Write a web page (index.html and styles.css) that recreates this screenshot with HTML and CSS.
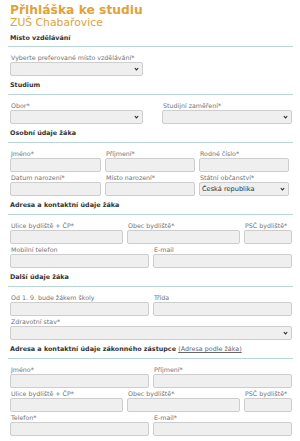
FILE: index.html
```html
<!DOCTYPE html>
<html lang="cs">
<head>
<meta charset="utf-8">
<title>Přihláška ke studiu</title>
<link rel="stylesheet" href="styles.css">
</head>
<body>
<div class="page">
  <header class="header">
    <h1 class="title">Přihláška ke studiu</h1>
    <div class="subtitle">ZUŠ Chabařovice</div>
  </header>

  <section class="section">
    <h2 class="sec-head sec-first">Místo vzdělávání</h2>
    <div class="fields">
      <div class="row cols-one">
        <div class="field"><span class="lbl">Vyberte preferované místo vzdělávání*</span>
          <div class="select"><span class="sel-text"></span><svg class="chev" viewBox="0 0 6 4"><path d="M1 1 L3 3 L5 1"/></svg></div></div>
      </div>
    </div>
  </section>

  <section class="section">
    <h2 class="sec-head">Studium</h2>
    <div class="fields">
      <div class="row cols-study">
        <div class="field"><span class="lbl">Obor*</span>
          <div class="select"><span class="sel-text"></span><svg class="chev" viewBox="0 0 6 4"><path d="M1 1 L3 3 L5 1"/></svg></div></div>
        <div class="field"><span class="lbl">Studijní zaměření*</span>
          <div class="select"><span class="sel-text"></span><svg class="chev" viewBox="0 0 6 4"><path d="M1 1 L3 3 L5 1"/></svg></div></div>
      </div>
    </div>
  </section>

  <section class="section">
    <h2 class="sec-head">Osobní údaje žáka</h2>
    <div class="fields">
      <div class="row cols-3">
        <div class="field"><span class="lbl">Jméno*</span><div class="input"></div></div>
        <div class="field"><span class="lbl">Příjmení*</span><div class="input"></div></div>
        <div class="field"><span class="lbl">Rodné číslo*</span><div class="input"></div></div>
      </div>
      <div class="row cols-3">
        <div class="field"><span class="lbl">Datum narození*</span><div class="input"></div></div>
        <div class="field"><span class="lbl">Místo narození*</span><div class="input"></div></div>
        <div class="field"><span class="lbl">Státní občanství*</span>
          <div class="select"><span class="sel-text">Česká republika</span><svg class="chev" viewBox="0 0 6 4"><path d="M1 1 L3 3 L5 1"/></svg></div></div>
      </div>
    </div>
  </section>

  <section class="section">
    <h2 class="sec-head">Adresa a kontaktní údaje žáka</h2>
    <div class="fields">
      <div class="row cols-addr">
        <div class="field"><span class="lbl">Ulice bydliště + ČP*</span><div class="input"></div></div>
        <div class="field"><span class="lbl">Obec bydliště*</span><div class="input"></div></div>
        <div class="field"><span class="lbl">PSČ bydliště*</span><div class="input"></div></div>
      </div>
      <div class="row cols-2">
        <div class="field"><span class="lbl">Mobilní telefon</span><div class="input"></div></div>
        <div class="field"><span class="lbl">E-mail</span><div class="input"></div></div>
      </div>
    </div>
  </section>

  <section class="section">
    <h2 class="sec-head">Další údaje žáka</h2>
    <div class="fields">
      <div class="row cols-2">
        <div class="field"><span class="lbl">Od 1. 9. bude žákem školy</span><div class="input"></div></div>
        <div class="field"><span class="lbl">Třída</span><div class="input"></div></div>
      </div>
      <div class="row">
        <div class="field"><span class="lbl">Zdravotní stav*</span>
          <div class="select"><span class="sel-text"></span><svg class="chev" viewBox="0 0 6 4"><path d="M1 1 L3 3 L5 1"/></svg></div></div>
      </div>
    </div>
  </section>

  <section class="section">
    <h2 class="sec-head">Adresa a kontaktní údaje zákonného zástupce <a class="link">(Adresa podle žáka)</a></h2>
    <div class="fields">
      <div class="row cols-2">
        <div class="field"><span class="lbl">Jméno*</span><div class="input"></div></div>
        <div class="field"><span class="lbl">Příjmení*</span><div class="input"></div></div>
      </div>
      <div class="row cols-addr">
        <div class="field"><span class="lbl">Ulice bydliště + ČP*</span><div class="input"></div></div>
        <div class="field"><span class="lbl">Obec bydliště*</span><div class="input"></div></div>
        <div class="field"><span class="lbl">PSČ bydliště*</span><div class="input"></div></div>
      </div>
      <div class="row cols-2">
        <div class="field"><span class="lbl">Telefon*</span><div class="input"></div></div>
        <div class="field"><span class="lbl">E-mail*</span><div class="input"></div></div>
      </div>
    </div>
  </section>
</div>
</body>
</html>
```

FILE: styles.css
```css
html, body {
  margin: 0;
  padding: 0;
  background: #ffffff;
}
body {
  font-family: "DejaVu Sans", Verdana, sans-serif;
  color: #333333;
}
.page {
  padding: 3px 7px 0 8px;
}
.header {
  padding-left: 2px;
}
.title {
  margin: 0;
  font-size: 12.3px;
  line-height: 14px;
  font-weight: bold;
  color: #e2a23a;
}
.subtitle {
  font-size: 10.8px;
  line-height: 12px;
  color: #e2a23a;
}
.sec-head {
  margin: 4px 0 0;
  padding: 0 2px 4px;
  font-size: 6.4px;
  line-height: 10px;
  font-weight: bold;
  color: #333333;
  border-bottom: 1px solid #b8d6d5;
}
.sec-head.sec-first {
  margin-top: 4px;
  padding-bottom: 3px;
}
.link {
  font-weight: normal;
  color: #666666;
  text-decoration: underline;
}
.fields {
  padding: 6px 1px 0 2px;
}
.row {
  display: grid;
  grid-template-columns: 1fr;
  margin-bottom: 1px;
}
.cols-one {
  grid-template-columns: 133px;
}
.cols-study {
  grid-template-columns: 133px 1fr;
  column-gap: 19px;
}
.cols-3 {
  grid-template-columns: 91px 90px 90px;
  column-gap: 4px;
}
.cols-addr {
  grid-template-columns: 113px 113px 1fr;
  column-gap: 4px;
}
.cols-2 {
  grid-template-columns: 1fr 1fr;
  column-gap: 4px;
}
.field {
  display: flex;
  flex-direction: column;
  min-width: 0;
}
.lbl {
  display: block;
  padding-left: 1px;
  font-size: 6.3px;
  line-height: 9px;
  color: #737373;
  white-space: nowrap;
}
.input, .select {
  box-sizing: border-box;
  height: 14px;
  background: #efefef;
  border: 1px solid #cdcdcd;
  border-radius: 2px;
}
.select {
  display: flex;
  align-items: center;
  justify-content: space-between;
  padding: 0 3px 0 2px;
}
.sel-text {
  font-size: 6.6px;
  color: #333333;
  white-space: nowrap;
}
.chev {
  width: 5px;
  height: 4px;
  fill: none;
  stroke: #333333;
  stroke-width: 1.4;
}
```
